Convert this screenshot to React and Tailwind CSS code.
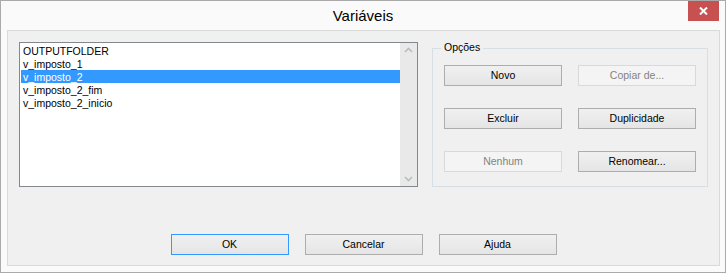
import React from 'react'

const items = ['OUTPUTFOLDER', 'v_imposto_1', 'v_imposto_2', 'v_imposto_2_fim', 'v_imposto_2_inicio']

const Btn = ({ children, disabled, focused }) => (
    <div
        className={
            'w-[118px] h-[21px] flex items-center justify-center border text-[10.5px] ' +
            (disabled
                ? 'border-[#d9d9d9] bg-[#f4f4f4] text-[#838383]'
                : focused
                    ? 'border-[#3399ff] bg-gradient-to-b from-[#f0f0f0] to-[#e5e5e5] text-black'
                    : 'border-[#adadad] bg-gradient-to-b from-[#f0f0f0] to-[#e5e5e5] text-black')
        }
    >
        {children}
    </div>
)

const App = () => {
    return (
        <div className="w-[726px] h-[273px] border border-[#aaaaaa] bg-[#fafafa] flex flex-col font-['Liberation_Sans',Arial,sans-serif] select-none">
            {/* Title bar */}
            <div className="h-[29px] relative flex items-center justify-center">
                <span className="text-[15px] text-black mt-[1px]">Variáveis</span>
                <div className="absolute top-0 right-[6px] w-[31px] h-[20px] bg-[#c75050] flex items-center justify-center">
                    <svg width="9" height="8" viewBox="0 0 9 8">
                        <path d="M1 0.5 L8 7.5 M8 0.5 L1 7.5" stroke="#ffffff" strokeWidth="2" />
                    </svg>
                </div>
            </div>

            {/* Content */}
            <div className="ml-[6px] mr-[5px] h-[236px] border border-[#d9d9d9] bg-[#f0f0f0] flex flex-col">
                <div className="flex pt-[11px] pl-[11px]">
                    {/* Listbox */}
                    <div className="w-[399px] h-[145px] border border-[#828790] bg-white flex">
                        <div className="flex-1 pt-[1px] pl-[1px] text-[10.5px] leading-[13px]">
                            {items.map((it, i) => (
                                <div
                                    key={it}
                                    className={'h-[13px] pl-[2px] pt-[1px] ' + (i === 2 ? 'bg-[#3399ff] text-white' : 'text-black')}
                                >
                                    {it}
                                </div>
                            ))}
                        </div>
                        <div className="w-[17px] bg-[#e9e9e9] flex flex-col justify-between items-center py-[4px]">
                            <svg width="9" height="6" viewBox="0 0 9 6">
                                <path d="M1 5 L4.5 1.5 L8 5" stroke="#bcbcbc" strokeWidth="1.6" fill="none" />
                            </svg>
                            <svg width="9" height="6" viewBox="0 0 9 6">
                                <path d="M1 1 L4.5 4.5 L8 1" stroke="#bcbcbc" strokeWidth="1.6" fill="none" />
                            </svg>
                        </div>
                    </div>

                    {/* Options group */}
                    <div className="ml-[14px] mt-[6px] w-[276px] h-[139px] border border-[#d5dfe5] relative px-[11px] pt-[16px]">
                        <span className="absolute -top-[8px] left-[8px] px-[3px] bg-[#f0f0f0] text-[10.5px] leading-[13px] text-black">
                            Opções
                        </span>
                        <div className="grid grid-cols-[118px_118px] gap-x-[16px] gap-y-[22px]">
                            <Btn>Novo</Btn>
                            <Btn disabled>Copiar de...</Btn>
                            <Btn>Excluir</Btn>
                            <Btn>Duplicidade</Btn>
                            <Btn disabled>Nenhum</Btn>
                            <Btn>Renomear...</Btn>
                        </div>
                    </div>
                </div>

                {/* Bottom buttons */}
                <div className="mt-[47px] flex justify-center gap-[16px]">
                    <Btn focused>OK</Btn>
                    <Btn>Cancelar</Btn>
                    <Btn>Ajuda</Btn>
                </div>
            </div>
        </div>
    )
}

export default App
